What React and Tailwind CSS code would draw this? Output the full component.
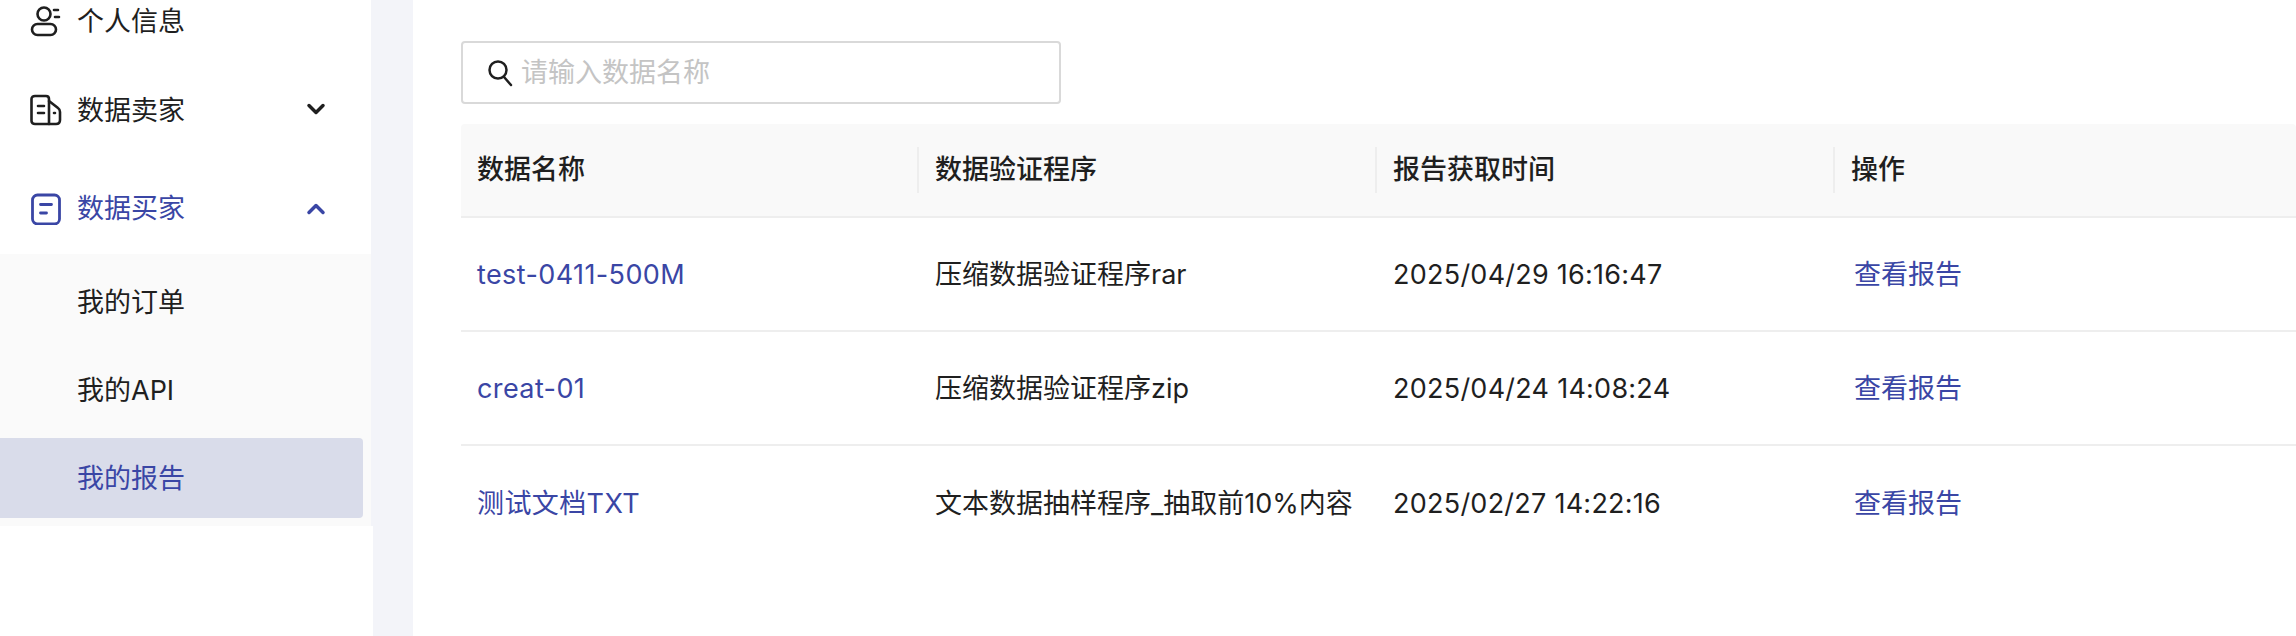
import React from "react";
import { ChevronDown, ChevronUp } from "lucide-react";

const UserIcon = () => (
  <svg width="32" height="36" viewBox="0 0 32 36" fill="none" stroke="currentColor" strokeWidth="2.6" strokeLinecap="round">
    <circle cx="14" cy="10" r="6.5" />
    <rect x="2" y="20" width="24" height="11" rx="5.5" />
    <path d="M24 6h4M25 13h4" />
  </svg>
);

const SellerIcon = () => (
  <svg width="32" height="32" viewBox="0 0 32 32" fill="none" stroke="currentColor" strokeWidth="2.6" strokeLinecap="round" strokeLinejoin="round">
    <path d="M5 2h11c1.500 0 3 1 3 3v25H5c-2 0-3.500-1-3.500-3V5C1.500 3 3 2 5 2z" />
    <path d="M19 7l9 7c1.500 1 2 2.500 2 4v8c0 2.500-1.500 4-4 4h-7" />
    <path d="M8 12h6M8 19h6M24 19h1" />
  </svg>
);

const BuyerIcon = () => (
  <svg width="32" height="32" viewBox="0 0 32 32" fill="none" stroke="currentColor" strokeWidth="2.800" strokeLinecap="round">
    <rect x="2.500" y="2" width="27" height="29" rx="5" />
    <path d="M10.500 11.500h11M10.500 20h6" />
  </svg>
);

const SearchIcon = () => (
  <svg width="26" height="28" viewBox="0 0 26 28" fill="none" stroke="#1f1f1f" strokeWidth="2.500" strokeLinecap="round">
    <circle cx="11" cy="11" r="8.500" />
    <path d="M17 18l7 8" />
  </svg>
);

const rows = [
  { name: "test-0411-500M", program: "压缩数据验证程序rar", time: "2025/04/29 16:16:47" },
  { name: "creat-01", program: "压缩数据验证程序zip", time: "2025/04/24 14:08:24" },
  { name: "测试文档TXT", program: "文本数据抽样程序_抽取前10%内容", time: "2025/02/27 14:22:16" },
];

const headers = ["数据名称", "数据验证程序", "报告获取时间", "操作"];

const Sidebar = () => (
  <aside className="w-[373px] shrink-0 flex flex-col">
    <div className="w-[371px] bg-white -mt-[22px]">
      <div className="h-[88px] flex items-center pl-[30px] text-[#1f1f1f]">
        <div className="w-[47px]"><UserIcon /></div>
        <span>个人信息</span>
      </div>
      <div className="h-[88px] flex items-center pl-[30px] text-[#1f1f1f]">
        <div className="w-[47px]"><SellerIcon /></div>
        <span className="pt-0.5">数据卖家</span>
        <ChevronDown className="ml-auto mr-[41px] -translate-y-px" size={28} strokeWidth={3} />
      </div>
      <div className="h-[100px] pt-[9px] flex items-center pl-[30px] text-[#3a46a5]">
        <div className="w-[47px]"><BuyerIcon /></div>
        <span>数据买家</span>
        <ChevronUp className="ml-auto mr-[41px]" size={28} strokeWidth={3} />
      </div>
    </div>
    <div className="w-[371px] bg-[#fafafa] pt-2 pb-2 pr-2 flex flex-col gap-2">
      <div className="h-[80px] flex items-center pl-[77px] pt-0.5 text-[#1f1f1f]">我的订单</div>
      <div className="h-[80px] flex items-center pl-[77px] pt-0.5 text-[#1f1f1f]">我的API</div>
      <div className="h-[80px] flex items-center pl-[77px] pt-0.5 text-[#3a46a5] bg-[#d9dcea] rounded-r">我的报告</div>
    </div>
    <div className="flex-1 bg-white" />
  </aside>
);

export default function App() {
  return (
    <div className="w-[2296px] h-[636px] overflow-hidden flex bg-[#f3f4f9] text-[27px] leading-[36px] font-['Inter','Noto_Sans_CJK_SC',sans-serif]">
      <Sidebar />
      <main className="ml-10 flex-1 bg-white pt-[41px] pl-12">
        <div className="w-[600px] h-[63px] border-2 border-[#d9d9d9] rounded flex items-center pl-6 gap-2">
          <SearchIcon />
          <span className="text-[#c4c4c4]">请输入数据名称</span>
        </div>
        <div className="mt-[20px]">
          <div className="h-[94px] grid grid-cols-[458px_458px_458px_1fr] items-center bg-[#f9f9f9] border-b-2 border-[#eeeeee] rounded-t font-medium text-[#1f1f1f]">
            {headers.map((h, i) => (
              <div key={h} className={`h-[46px] flex items-center pl-4 ${i < 3 ? "border-r-2 border-[#eeeeee]" : ""}`}>{h}</div>
            ))}
          </div>
          {rows.map((r, i) => (
            <div key={r.name} className={`h-[114px] grid grid-cols-[458px_458px_458px_1fr] items-center text-[#1f1f1f] tracking-[0.25px] ${i < 2 ? "border-b-2 border-[#eeeeee]" : ""}`}>
              <div className="pl-4 pt-0.5 text-[#3a46a5] tracking-[0.4px]">{r.name}</div>
              <div className="pl-4 pt-0.5 tracking-normal">{r.program}</div>
              <div className="pl-4 pt-0.5">{r.time}</div>
              <div className="pl-[19px] pt-0.5 text-[#3a46a5] tracking-normal">查看报告</div>
            </div>
          ))}
        </div>
      </main>
    </div>
  );
}
